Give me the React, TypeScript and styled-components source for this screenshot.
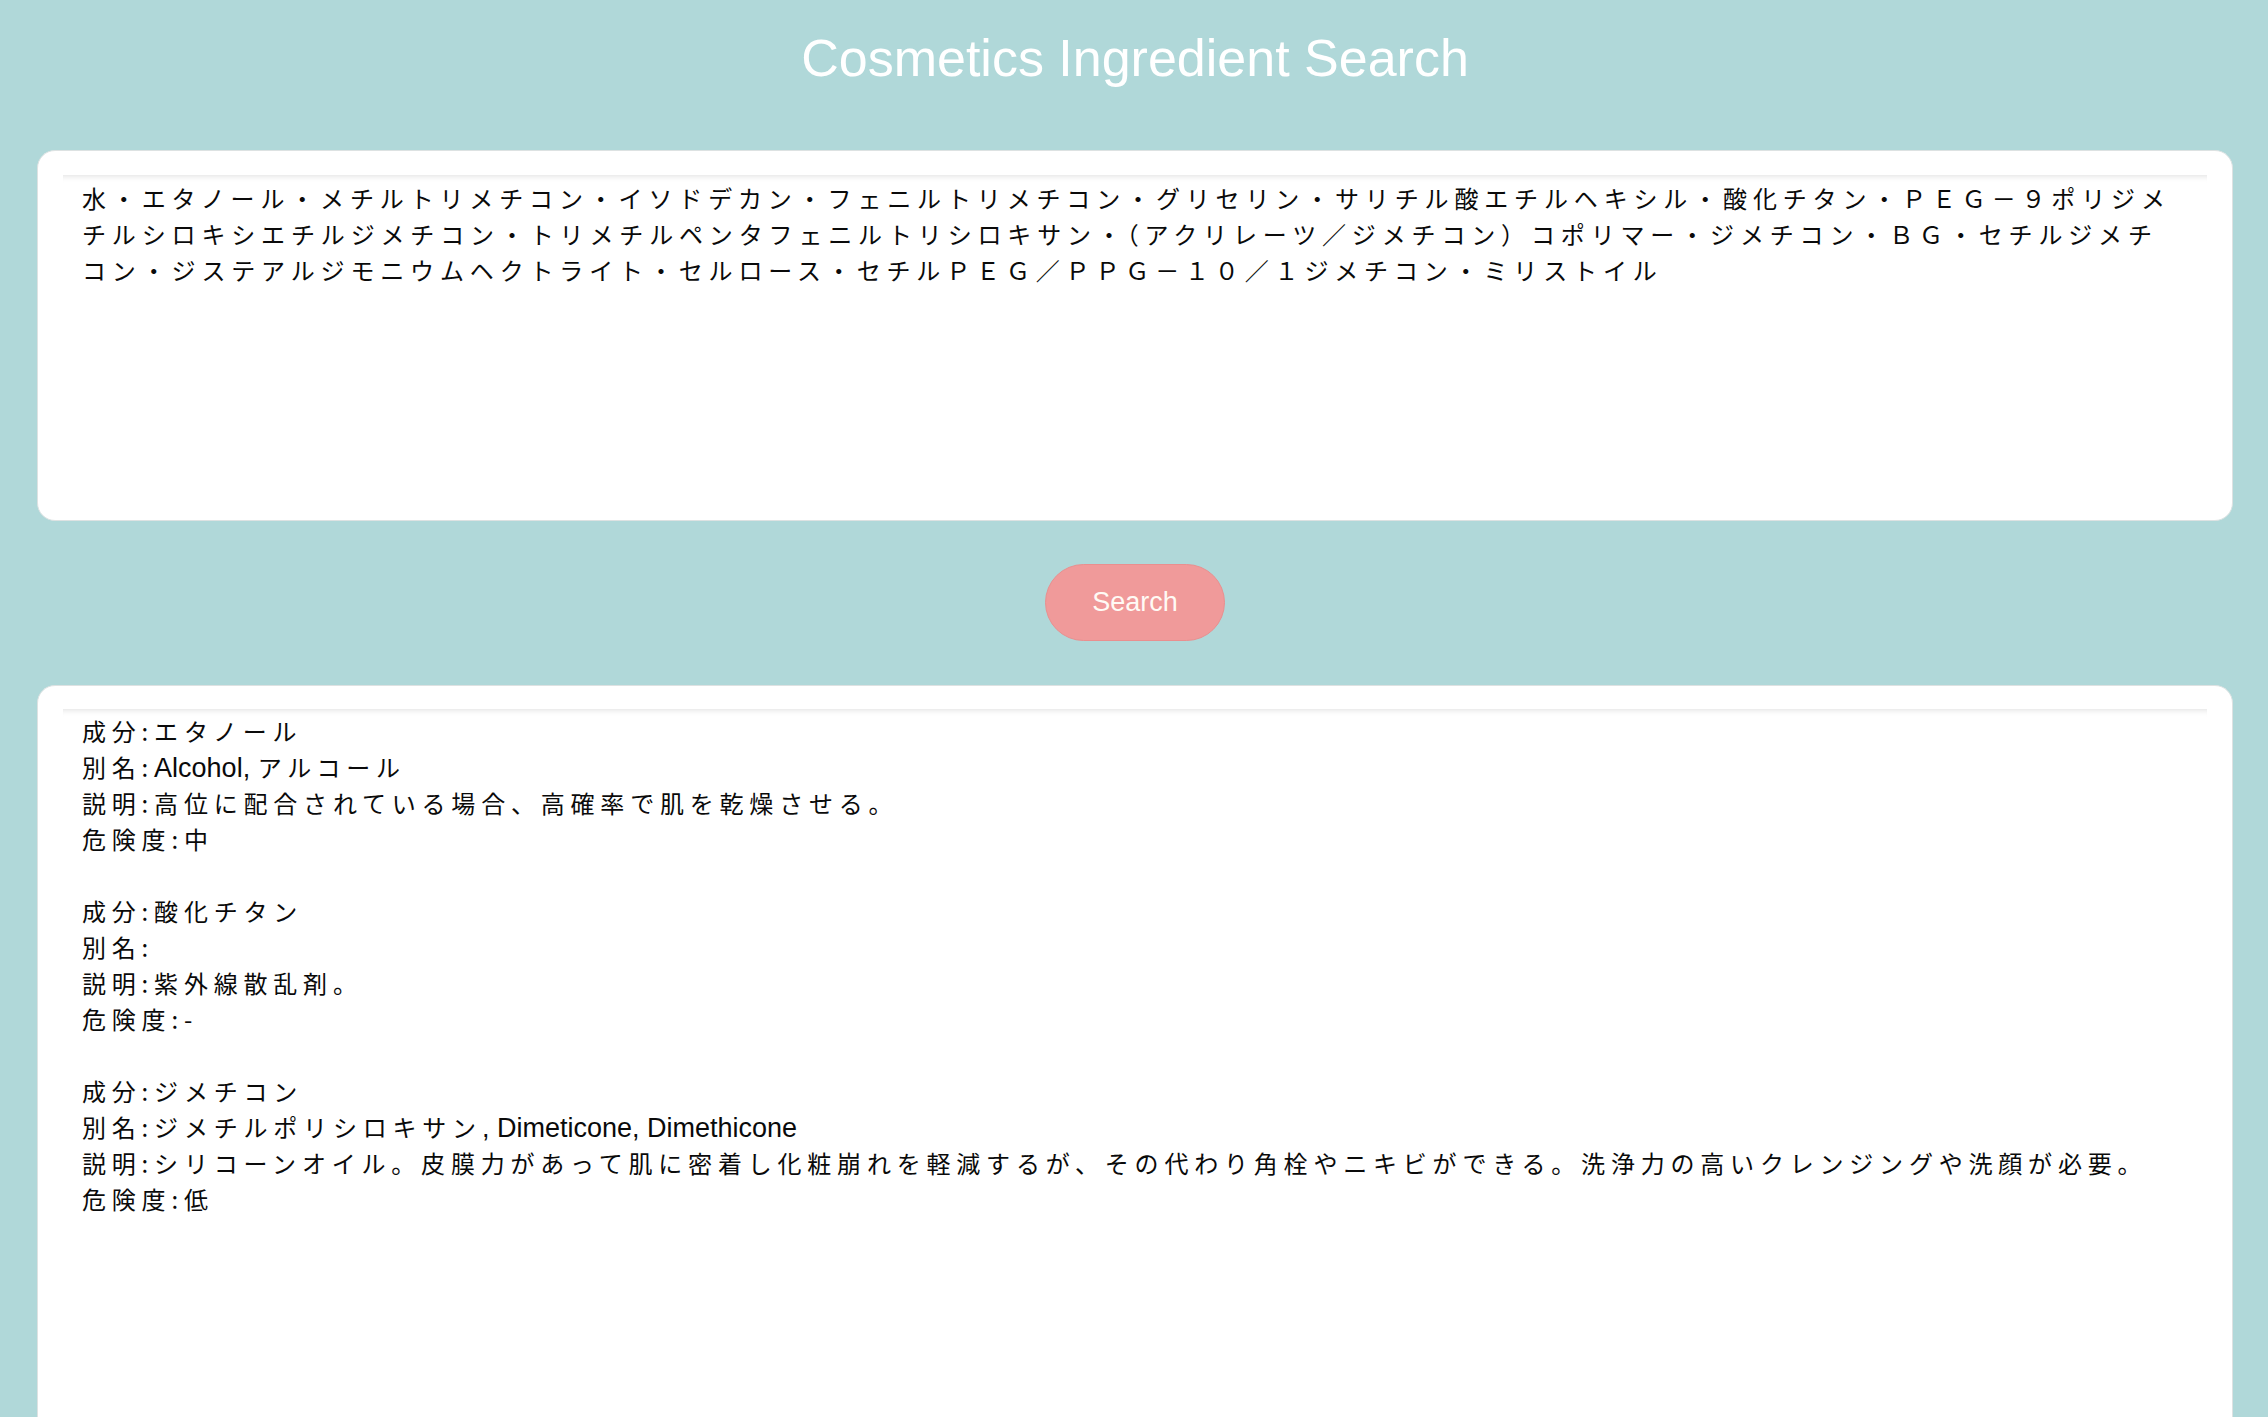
import React from 'react';
import styled, { createGlobalStyle } from 'styled-components';

const ingredientsText =
  '水・エタノール・メチルトリメチコン・イソドデカン・フェニルトリメチコン・グリセリン・サリチル酸エチルヘキシル・酸化チタン・ＰＥＧ－９ポリジメ\n' +
  'チルシロキシエチルジメチコン・トリメチルペンタフェニルトリシロキサン・（アクリレーツ／ジメチコン）コポリマー・ジメチコン・ＢＧ・セチルジメチ\n' +
  'コン・ジステアルジモニウムヘクトライト・セルロース・セチルＰＥＧ／ＰＰＧ－１０／１ジメチコン・ミリストイル';

interface Ingredient {
  name: string;
  alias: string;
  description: string;
  risk: string;
}

const results: Ingredient[] = [
  {
    name: 'エタノール',
    alias: 'Alcohol, アルコール',
    description: '高位に配合されている場合、高確率で肌を乾燥させる。',
    risk: '中',
  },
  {
    name: '酸化チタン',
    alias: '',
    description: '紫外線散乱剤。',
    risk: '-',
  },
  {
    name: 'ジメチコン',
    alias: 'ジメチルポリシロキサン, Dimeticone, Dimethicone',
    description:
      'シリコーンオイル。皮膜力があって肌に密着し化粧崩れを軽減するが、その代わり角栓やニキビができる。洗浄力の高いクレンジングや洗顔が必要。',
    risk: '低',
  },
];

// latin words get their own font and no letter spacing
const renderMixed = (text: string) =>
  text.split(/([, ]*[A-Za-z][A-Za-z, ]*)/).map((part, idx) =>
    /[A-Za-z]/.test(part)
      ? <Latin key={`l-${idx}`}>{part}</Latin>
      : <React.Fragment key={`j-${idx}`}>{part}</React.Fragment>
  );

const App: React.FC = () => {
  const [value, setValue] = React.useState(ingredientsText);

  return (
    <Page>
      <GlobalStyle />
      <Title>Cosmetics Ingredient Search</Title>
      <InputCard>
        <IngredientInput
          value={value}
          spellCheck={false}
          onChange={(e) => setValue(e.target.value)}
        />
      </InputCard>
      <ButtonRow>
        <SearchButton type="button">Search</SearchButton>
      </ButtonRow>
      <ResultCard>
        <ResultArea>
          {results.map((r, idx) => (
            <Entry key={`res-${idx}`}>
              <Line>成分:{renderMixed(r.name)}</Line>
              <Line>別名:{renderMixed(r.alias)}</Line>
              <Line>説明:{renderMixed(r.description)}</Line>
              <Line>危険度:{r.risk}</Line>
            </Entry>
          ))}
        </ResultArea>
      </ResultCard>
    </Page>
  );
};

const GlobalStyle = createGlobalStyle`
  html, body {
    margin: 0;
    padding: 0;
    background: #b0d8d9;
  }
  * {
    box-sizing: border-box;
  }
`;

const Page = styled.div`
  min-height: 100vh;
  display: flex;
  flex-direction: column;
  padding: 0 35px 0 37px;
  font-family: "Liberation Sans", "Noto Sans CJK JP", sans-serif;
`;

const Title = styled.h1`
  margin: 28px 0 62px;
  text-align: center;
  color: #ffffff;
  font-size: 52px;
  line-height: 60px;
  font-weight: 400;
`;

const Card = styled.div`
  background: #ffffff;
  border: 1px solid #dde2e2;
`;

const InputCard = styled(Card)`
  height: 371px;
  padding: 24px 25px 24px 25px;
  border-radius: 18px;
`;

const insetTop = `
  box-shadow: inset 0 7px 6px -6px rgba(0, 0, 0, 0.13);
`;

const IngredientInput = styled.textarea`
  display: block;
  width: 100%;
  height: 100%;
  margin: 0;
  padding: 5px 4px 0 19px;
  border: none;
  outline: none;
  resize: none;
  background: #ffffff;
  ${insetTop}
  color: #0a0a0a;
  font-family: "Noto Sans CJK JP", sans-serif;
  font-size: 24px;
  line-height: 36px;
  letter-spacing: 5.85px;
`;

const ButtonRow = styled.div`
  display: flex;
  justify-content: center;
  padding: 43px 0 44px;
`;

const SearchButton = styled.button`
  width: 180px;
  height: 77px;
  border: 1px solid #e98f8f;
  border-radius: 39px;
  background: #f09a9a;
  color: #fffaf5;
  font-family: "Liberation Sans", sans-serif;
  font-size: 27px;
  cursor: pointer;
`;

const ResultCard = styled(Card)`
  height: 760px;
  padding: 23px 25px 0 25px;
  border-radius: 18px 18px 0 0;
`;

const ResultArea = styled.div`
  height: 100%;
  padding: 4px 4px 0 19px;
  ${insetTop}
  color: #0a0a0a;
  font-family: "Noto Sans CJK JP", sans-serif;
  font-size: 24px;
  line-height: 36px;
  letter-spacing: 5.8px;
`;

const Entry = styled.div`
  margin-bottom: 36px;
`;

const Line = styled.div`
  height: 36px;
  white-space: nowrap;
`;

const Latin = styled.span`
  font-family: "Liberation Sans", sans-serif;
  font-size: 27px;
  letter-spacing: 0;
`;

export default App;
